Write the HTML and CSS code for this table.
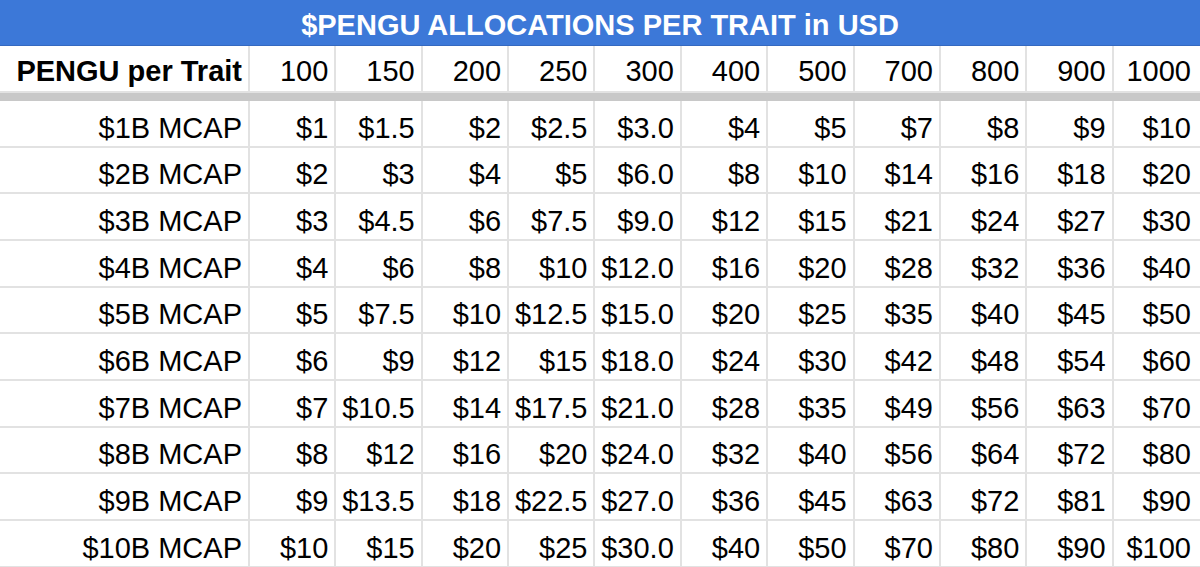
FILE: index.html
```html
<!DOCTYPE html>
<html lang="en">
<head>
<meta charset="utf-8">
<title>$PENGU Allocations per Trait</title>
<link rel="stylesheet" href="styles.css">
</head>
<body>
<div class="sheet">
  <div class="title">$PENGU ALLOCATIONS PER TRAIT in USD</div>
  <div class="row head">
    <div class="cell">PENGU per Trait</div>
    <div class="cell num">100</div><div class="cell num">150</div><div class="cell num">200</div><div class="cell num">250</div><div class="cell num">300</div><div class="cell num">400</div><div class="cell num">500</div><div class="cell num">700</div><div class="cell num">800</div><div class="cell num">900</div><div class="cell num">1000</div>
  </div>
  <div class="band"></div>
  <div class="row"><div class="cell">$1B MCAP</div><div class="cell">$1</div><div class="cell">$1.5</div><div class="cell">$2</div><div class="cell">$2.5</div><div class="cell">$3.0</div><div class="cell">$4</div><div class="cell">$5</div><div class="cell">$7</div><div class="cell">$8</div><div class="cell">$9</div><div class="cell">$10</div></div>
  <div class="row"><div class="cell">$2B MCAP</div><div class="cell">$2</div><div class="cell">$3</div><div class="cell">$4</div><div class="cell">$5</div><div class="cell">$6.0</div><div class="cell">$8</div><div class="cell">$10</div><div class="cell">$14</div><div class="cell">$16</div><div class="cell">$18</div><div class="cell">$20</div></div>
  <div class="row"><div class="cell">$3B MCAP</div><div class="cell">$3</div><div class="cell">$4.5</div><div class="cell">$6</div><div class="cell">$7.5</div><div class="cell">$9.0</div><div class="cell">$12</div><div class="cell">$15</div><div class="cell">$21</div><div class="cell">$24</div><div class="cell">$27</div><div class="cell">$30</div></div>
  <div class="row"><div class="cell">$4B MCAP</div><div class="cell">$4</div><div class="cell">$6</div><div class="cell">$8</div><div class="cell">$10</div><div class="cell">$12.0</div><div class="cell">$16</div><div class="cell">$20</div><div class="cell">$28</div><div class="cell">$32</div><div class="cell">$36</div><div class="cell">$40</div></div>
  <div class="row"><div class="cell">$5B MCAP</div><div class="cell">$5</div><div class="cell">$7.5</div><div class="cell">$10</div><div class="cell">$12.5</div><div class="cell">$15.0</div><div class="cell">$20</div><div class="cell">$25</div><div class="cell">$35</div><div class="cell">$40</div><div class="cell">$45</div><div class="cell">$50</div></div>
  <div class="row"><div class="cell">$6B MCAP</div><div class="cell">$6</div><div class="cell">$9</div><div class="cell">$12</div><div class="cell">$15</div><div class="cell">$18.0</div><div class="cell">$24</div><div class="cell">$30</div><div class="cell">$42</div><div class="cell">$48</div><div class="cell">$54</div><div class="cell">$60</div></div>
  <div class="row"><div class="cell">$7B MCAP</div><div class="cell">$7</div><div class="cell">$10.5</div><div class="cell">$14</div><div class="cell">$17.5</div><div class="cell">$21.0</div><div class="cell">$28</div><div class="cell">$35</div><div class="cell">$49</div><div class="cell">$56</div><div class="cell">$63</div><div class="cell">$70</div></div>
  <div class="row"><div class="cell">$8B MCAP</div><div class="cell">$8</div><div class="cell">$12</div><div class="cell">$16</div><div class="cell">$20</div><div class="cell">$24.0</div><div class="cell">$32</div><div class="cell">$40</div><div class="cell">$56</div><div class="cell">$64</div><div class="cell">$72</div><div class="cell">$80</div></div>
  <div class="row"><div class="cell">$9B MCAP</div><div class="cell">$9</div><div class="cell">$13.5</div><div class="cell">$18</div><div class="cell">$22.5</div><div class="cell">$27.0</div><div class="cell">$36</div><div class="cell">$45</div><div class="cell">$63</div><div class="cell">$72</div><div class="cell">$81</div><div class="cell">$90</div></div>
  <div class="row"><div class="cell">$10B MCAP</div><div class="cell">$10</div><div class="cell">$15</div><div class="cell">$20</div><div class="cell">$25</div><div class="cell">$30.0</div><div class="cell">$40</div><div class="cell">$50</div><div class="cell">$70</div><div class="cell">$80</div><div class="cell">$90</div><div class="cell">$100</div></div>
</div>
</body>
</html>
```
FILE: styles.css
```css
* { box-sizing: border-box; }
html, body { margin: 0; padding: 0; background: #ffffff; }
body {
  font-family: "Liberation Sans", Arial, sans-serif;
  font-size: 29px;
  color: #000000;
  overflow: hidden;
}
.sheet { width: 1200px; height: 567px; overflow: hidden; }
.title {
  height: 46px;
  background: #3c78d8;
  border-bottom: 1px solid #3569c0;
  color: #ffffff;
  font-weight: bold;
  text-align: center;
  line-height: 29px;
  padding-top: 10.5px;
  white-space: nowrap;
}
.row {
  display: grid;
  grid-template-columns: 250px repeat(11, 1fr);
  height: 46.67px;
}
.cell {
  border-right: 2px solid #e2e2e2;
  border-bottom: 2px solid #e2e2e2;
  text-align: right;
  line-height: 29px;
  padding: 12.8px 6px 0 0;
  white-space: nowrap;
}
.cell:last-child { border-right: none; padding-right: 9px; }
.head { height: 47px; }
.head .cell { padding-top: 11.2px; }
.head .cell:first-child { font-weight: bold; }
.band { height: 8px; background: #c8c8c8; }
```
